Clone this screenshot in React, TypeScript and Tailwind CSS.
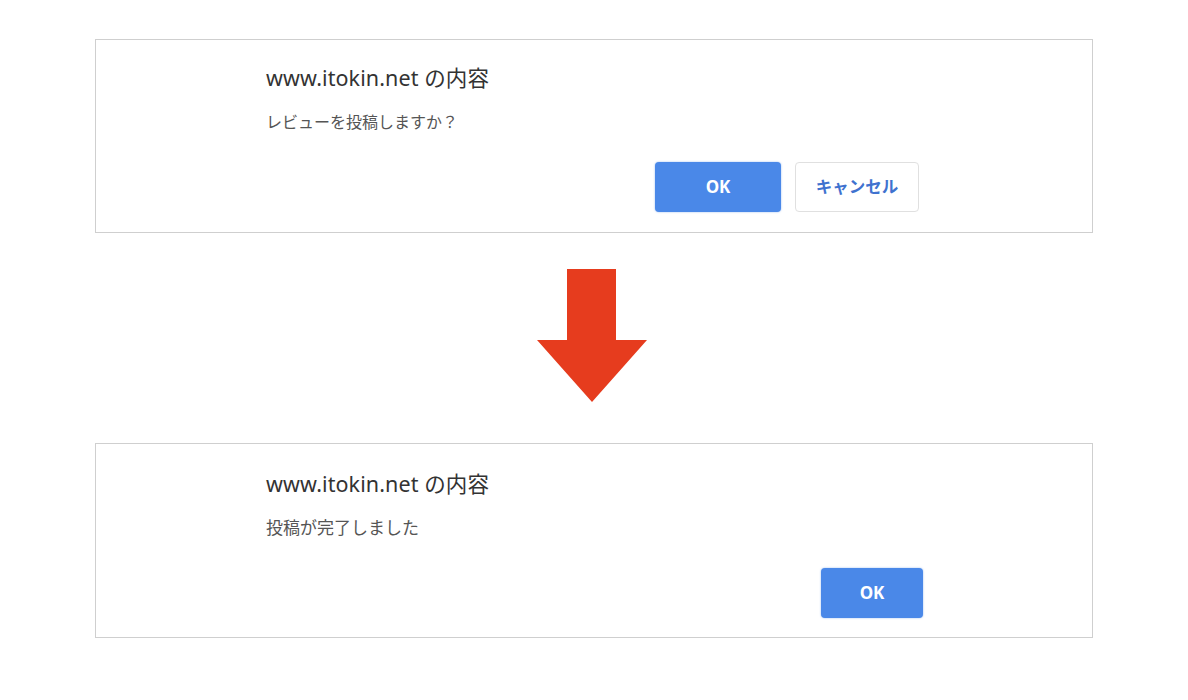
import React from "react";

const font = { fontFamily: '"Noto Sans", "Noto Sans CJK JP", sans-serif' };

const Dialog = ({
  message,
  showCancel,
  okWidth,
  msgSize,
  className,
}: {
  message: string;
  showCancel?: boolean;
  okWidth: string;
  msgSize: string;
  className: string;
}) => (
  <div className={`w-[998px] ml-[95px] border border-[#cfcfcf] bg-white ${className}`}>
    <div className="pl-[170px]">
      <div className="text-[21.5px] leading-[28px] text-[#333] tracking-[0.1px]">www.itokin.net の内容</div>
      <div className={`mt-[18px] leading-[24px] text-[#555] ${msgSize}`}>{message}</div>
    </div>
    <div className="flex justify-end gap-[14px]">
      <button className={`${okWidth} h-[50px] rounded-[4px] bg-[#4a88e8] text-white text-[17px] font-bold shadow-[0_0_2px_rgba(74,136,232,0.6)]`}>
        OK
      </button>
      {showCancel && (
        <button className="w-[124px] h-[50px] rounded-[4px] border border-[#e0e0e0] bg-white text-[#3f72cf] text-[16.5px] font-bold">
          キャンセル
        </button>
      )}
    </div>
  </div>
);

export default function App() {
  return (
    <div className="w-[1188px] h-[700px] bg-white overflow-hidden" style={font}>
      <div className="pt-[39px]">
        <Dialog
          message="レビューを投稿しますか？"
          showCancel
          okWidth="w-[126px]"
          msgSize="text-[16px]"
          className="pt-[24px] pb-[20px] pr-[173px] [&>div:last-child]:mt-[28px]"
        />
      </div>
      <div className="flex justify-start pl-[537px] pt-[36px]">
        <svg width="110" height="133" viewBox="0 0 110 133">
          <polygon points="30,0 79,0 79,71 110,71 55,133 0,71 30,71" fill="#e63c1e" />
        </svg>
      </div>
      <div className="pt-[41px]">
        <Dialog
          message="投稿が完了しました"
          okWidth="w-[102px]"
          msgSize="text-[17px]"
          className="pt-[26px] pb-[19px] pr-[169px] [&>div:last-child]:mt-[28px]"
        />
      </div>
    </div>
  );
}
